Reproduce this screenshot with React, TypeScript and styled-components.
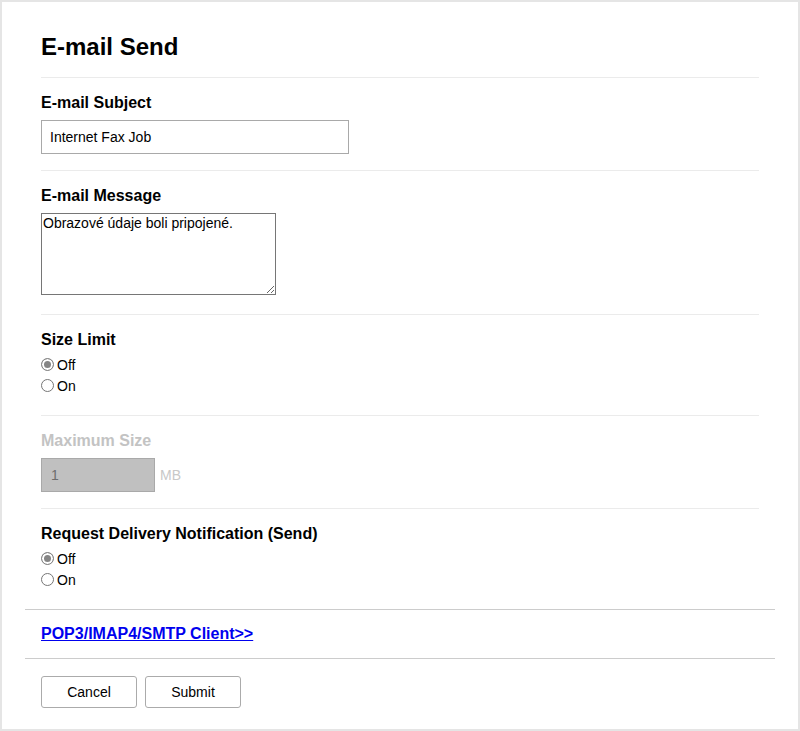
import React, { useState } from 'react';
import styled, { createGlobalStyle } from 'styled-components';

const GlobalStyle = createGlobalStyle`
	html, body {
		margin: 0;
		padding: 0;
		background: #e5e5e5;
	}
	body {
		font-family: "Liberation Sans", Arial, sans-serif;
		color: #000;
	}
	* {
		box-sizing: border-box;
	}
`;

const Panel = styled.div`
	margin: 2px;
	background: #fff;
	padding: 0 23px;
`;

const Header = styled.div`
	margin: 0 16px;
	padding: 31px 0 16px;
	border-bottom: 1px solid #ebebeb;
`;

const Title = styled.h1`
	margin: 0;
	font-size: 24px;
	line-height: 28px;
	font-weight: bold;
`;

const Section = styled.div<{ $last?: boolean }>`
	margin: 0 16px;
	padding: 16px 0 16px;
	border-bottom: ${props => (props.$last ? 'none' : '1px solid #ebebeb')};
`;

const Label = styled.div<{ $disabled?: boolean; $tight?: boolean }>`
	font-size: 16px;
	line-height: 18px;
	font-weight: bold;
	margin-bottom: ${props => (props.$tight ? '5px' : '8px')};
	color: ${props => (props.$disabled ? '#c3c3c3' : '#000')};
`;

const TextInput = styled.input`
	display: block;
	width: 308px;
	height: 34px;
	border: 1px solid #a9a9a9;
	border-radius: 0;
	padding: 0 8px;
	font-family: inherit;
	font-size: 14px;
	color: #000;
	background: #fff;
	outline: none;
`;

const MessageArea = styled.textarea`
	display: block;
	width: 235px;
	height: 82px;
	margin: 0 0 3px;
	border: 1px solid #767676;
	border-radius: 0;
	padding: 1px;
	font-family: inherit;
	font-size: 14px;
	line-height: 16px;
	color: #000;
	outline: none;
`;

const SizeRow = styled.div`
	display: flex;
	flex-flow: row nowrap;
	align-items: center;
	gap: 5px;
`;

const SizeInput = styled.input`
	display: block;
	width: 114px;
	height: 34px;
	border: 1px solid #a9a9a9;
	border-radius: 0;
	padding: 0 9px;
	font-family: inherit;
	font-size: 14px;
	background: #c0c0c0;
	color: #6d6d6d;
	-webkit-text-fill-color: #6d6d6d;
	opacity: 1;
`;

const Unit = styled.span`
	font-size: 14px;
	color: #c8c8c8;
`;

const RadioGroup = styled.div`
	display: flex;
	flex-flow: column nowrap;
	margin-bottom: 3px;
`;

const RadioRow = styled.label`
	display: flex;
	flex-flow: row nowrap;
	align-items: center;
	height: 21px;
	font-size: 14px;
	cursor: default;
`;

const Radio = styled.input`
	appearance: none;
	-webkit-appearance: none;
	width: 13px;
	height: 13px;
	margin: 0 3px 0 0;
	border: 1px solid #767676;
	border-radius: 50%;
	background: #fff;

	&:checked {
		border-color: #858585;
		background: #858585;
		box-shadow: inset 0 0 0 2px #fff;
	}
`;

const LinkSection = styled.div`
	padding: 15px 16px 15px;
	border-top: 1px solid #cccccc;
	border-bottom: 1px solid #cccccc;
`;

const ClientLink = styled.a`
	font-size: 16px;
	line-height: 18px;
	font-weight: bold;
	color: #0000ee;
	text-decoration: underline;
`;

const Actions = styled.div`
	display: flex;
	flex-flow: row nowrap;
	gap: 8px;
	padding: 17px 16px 21px;
`;

const Button = styled.button`
	width: 96px;
	height: 32px;
	border: 1px solid #ababab;
	border-radius: 3px;
	background: #fff;
	font-family: inherit;
	font-size: 14px;
	color: #000;
	padding: 0;
`;

interface OnOffProps {
	name: string;
	value: string;
	onChange: (v: string) => void;
}

const OnOff: React.FC<OnOffProps> = ({ name, value, onChange }) => (
	<RadioGroup>
		{['Off', 'On'].map(opt => (
			<RadioRow key={opt}>
				<Radio type="radio" name={name} checked={value === opt} onChange={() => onChange(opt)} />
				{opt}
			</RadioRow>
		))}
	</RadioGroup>
);

export default function App() {
	const [subject, setSubject] = useState('Internet Fax Job');
	const [message, setMessage] = useState('Obrazové údaje boli pripojené.');
	const [sizeLimit, setSizeLimit] = useState('Off');
	const [notify, setNotify] = useState('Off');

	return (
		<>
			<GlobalStyle />
			<Panel>
				<Header>
					<Title>E-mail Send</Title>
				</Header>

				<Section>
					<Label>E-mail Subject</Label>
					<TextInput value={subject} onChange={e => setSubject(e.target.value)} />
				</Section>

				<Section>
					<Label>E-mail Message</Label>
					<MessageArea value={message} onChange={e => setMessage(e.target.value)} />
				</Section>

				<Section>
					<Label $tight>Size Limit</Label>
					<OnOff name="sizeLimit" value={sizeLimit} onChange={setSizeLimit} />
				</Section>

				<Section>
					<Label $disabled>Maximum Size</Label>
					<SizeRow>
						<SizeInput value="1" disabled={sizeLimit === 'Off'} readOnly />
						<Unit>MB</Unit>
					</SizeRow>
				</Section>

				<Section $last>
					<Label $tight>Request Delivery Notification (Send)</Label>
					<OnOff name="notify" value={notify} onChange={setNotify} />
				</Section>

				<LinkSection>
					<ClientLink href="#">POP3/IMAP4/SMTP Client&gt;&gt;</ClientLink>
				</LinkSection>

				<Actions>
					<Button type="button">Cancel</Button>
					<Button type="button">Submit</Button>
				</Actions>
			</Panel>
		</>
	);
}
